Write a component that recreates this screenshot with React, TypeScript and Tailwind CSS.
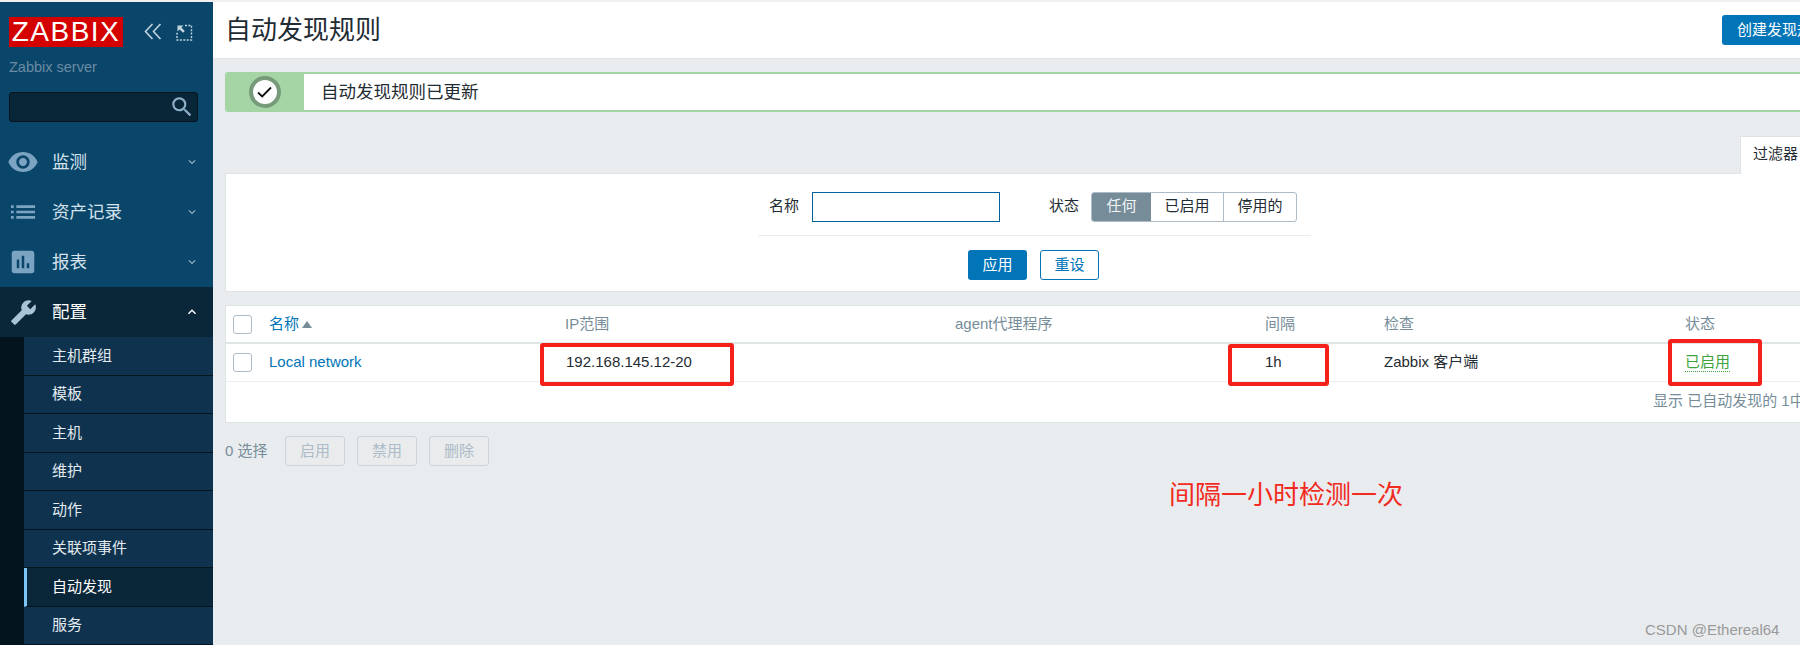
import { MdVisibility, MdList, MdAssessment, MdBuild, MdExpandMore, MdExpandLess, MdSearch } from "react-icons/md";

const font = { fontFamily: '"Liberation Sans","Noto Sans CJK SC",sans-serif' };

const mainNav = [
  { label: "监测", Icon: MdVisibility, size: 32 },
  { label: "资产记录", Icon: MdList, size: 32 },
  { label: "报表", Icon: MdAssessment, size: 30 },
];
const subNav = ["主机群组", "模板", "主机", "维护", "动作", "关联项事件", "自动发现", "服务"];

function Checkbox() {
  return <span className="block h-[19px] w-[19px] rounded-[3px] border border-[#acbbc7] bg-white" />;
}

function DisabledBtn({ label }: { label: string }) {
  return (
    <button className="flex h-[30px] w-[60px] items-center justify-center rounded-[3px] border border-[#cdd5db] bg-[#e9ebed] text-[15px] text-[#acbbc7]">
      {label}
    </button>
  );
}

function Sidebar() {
  return (
    <aside className="flex h-[643px] w-[213px] shrink-0 flex-col bg-[#0a466a]">
      <div className="flex h-[55px] shrink-0 items-start pl-[9px] pt-[15px]">
        <div className="flex h-[30px] w-[114px] items-center justify-center bg-[#d40000] text-[28px] leading-none tracking-[1.5px] text-white">
          ZABBIX
        </div>
        <svg className="ml-[21px] mt-[6px]" width="18" height="17" viewBox="0 0 18 17" fill="none" stroke="#c3d3df" strokeWidth="1.6">
          <path d="M8.5 1 1.5 8.5 8.5 16M16.5 1 9.5 8.5 16.5 16" />
        </svg>
        <svg className="ml-[14px] mt-[7px]" width="17" height="17" viewBox="0 0 17 17" fill="none" stroke="#c3d3df" strokeWidth="1.4">
          <path d="M9 1.5h6.5V16H1V8" strokeDasharray="2 1.4" />
          <path d="M1.5 1.5h6L5.4 3.6l3.4 3.4-1.8 1.8L3.6 5.4 1.5 7.5z" fill="#c3d3df" stroke="none" />
        </svg>
      </div>
      <div className="h-[20px] shrink-0 pl-[9px] text-[14.5px] leading-[20px] text-[#6a8ba3]">Zabbix server</div>
      <div className="relative ml-[9px] mt-[15px] h-[30px] w-[189px] shrink-0 rounded-[3px] border border-[#04141f] bg-[#082638]">
        <MdSearch className="absolute right-[2px] top-[1px] text-[#8db0c8]" size={26} />
      </div>
      <nav className="mt-[15px] flex flex-col">
        {mainNav.map(({ label, Icon, size }) => (
          <div key={label} className="flex h-[50px] items-center text-[#d5e2ec]">
            <span className="flex w-[52px] justify-center pr-[6px] text-[#7ba4c2]">
              <Icon size={size} />
            </span>
            <span className="flex-1 text-[17.5px]">{label}</span>
            <MdExpandMore className="mr-[14px] text-[#9fb9cc]" size={14} />
          </div>
        ))}
        <div className="flex h-[50px] items-center bg-[#0a2639] text-white">
          <span className="flex w-[52px] justify-center pr-[6px] text-[#a9c3d6]">
            <MdBuild size={27} className="-scale-x-100" />
          </span>
          <span className="flex-1 text-[17.5px]">配置</span>
          <MdExpandLess className="mr-[13px] text-white" size={16} />
        </div>
      </nav>
      <div className="flex flex-1 flex-col bg-[#04141f] pl-[24px]">
        {subNav.map((item) => {
          const active = item === "自动发现";
          return (
            <div
              key={item}
              className={
                active
                  ? "flex h-[38.5px] items-center border-b border-l-[3px] border-b-[#04141f] border-l-[#7ac5f5] bg-[#0a2639] pl-[25px] text-[15px] text-white"
                  : "flex h-[38.5px] items-center border-b border-[#04141f] bg-[#0f334f] pl-[28px] text-[15px] text-[#e4ebf0]"
              }
            >
              {item}
            </div>
          );
        })}
      </div>
    </aside>
  );
}

function Filter() {
  return (
    <div className="flex h-[119px] w-[1700px] flex-col border border-[#dfe4e7] bg-white">
      <div className="flex h-[61px] items-center pt-[4px]">
        <span className="ml-[543px] text-[15px] text-[#1f2c33]">名称</span>
        <span className="ml-[13px] block h-[30px] w-[188px] border border-[#00629c] bg-white" />
        <span className="ml-[49px] text-[15px] text-[#1f2c33]">状态</span>
        <div className="ml-[12px] flex h-[30px] w-[206px] overflow-hidden rounded-[3px] border border-[#acbbc7] text-[15px] text-[#1f2c33]">
          <span className="flex w-[59px] items-center justify-center bg-[#768d99] text-[#f0f3f5]">任何</span>
          <span className="flex w-[73px] items-center justify-center border-r border-[#acbbc7]">已启用</span>
          <span className="flex flex-1 items-center justify-center">停用的</span>
        </div>
      </div>
      <div className="ml-[532px] h-px w-[553px] bg-[#ebeef0]" />
      <div className="flex items-center gap-[13px] pl-[742px] pt-[14px]">
        <button className="flex h-[30px] w-[59px] items-center justify-center rounded-[3px] bg-[#0275b8] text-[15px] text-white">应用</button>
        <button className="flex h-[30px] w-[59px] items-center justify-center rounded-[3px] border border-[#0275b8] bg-white text-[15px] text-[#0275b8]">重设</button>
      </div>
    </div>
  );
}

function Table() {
  return (
    <div className="mt-[13px] w-[1700px] border border-[#dfe4e7] bg-white text-[15px]">
      <div className="flex h-[38px] items-center border-b-2 border-[#dfe4e7] text-[#768d99]">
        <span className="ml-[7px] w-[36px]"><Checkbox /></span>
        <span className="flex w-[296px] items-center gap-[3px] text-[#0275b8]">
          名称
          <svg width="10" height="7" viewBox="0 0 10 7"><path d="M5 0 10 7H0z" fill="#768d99" /></svg>
        </span>
        <span className="w-[390px]">IP范围</span>
        <span className="w-[310px]">agent代理程序</span>
        <span className="w-[119px]">间隔</span>
        <span className="w-[301px]">检查</span>
        <span>状态</span>
      </div>
      <div className="flex h-[38px] items-center border-b border-[#ebeef0] text-[#1f2c33]">
        <span className="ml-[7px] w-[36px]"><Checkbox /></span>
        <span className="w-[297px] text-[#0275b8]">Local network</span>
        <span className="w-[389px]">192.168.145.12-20</span>
        <span className="w-[310px]" />
        <span className="w-[119px]">1h</span>
        <span className="w-[301px]">Zabbix 客户端</span>
        <span className="border-b border-dotted border-[#3da33d] leading-[18px] text-[#3da33d]">已启用</span>
      </div>
      <div className="flex h-[40px] items-center pb-[1px] pl-[1427px] whitespace-nowrap text-[#768d99]">显示 已自动发现的 1中的1</div>
    </div>
  );
}

export default function App() {
  return (
    <div className="relative flex h-[645px] w-[1800px] overflow-hidden bg-[#e9ecef]" style={font}>
      <div className="flex w-full flex-col">
        <div className="h-[2px] shrink-0 bg-[#f0f0f0]" />
        <div className="flex">
          <Sidebar />
          <main className="min-w-0 flex-1 overflow-hidden">
            <header className="flex h-[57px] w-[1700px] items-center border-b border-[#dfe4e7] bg-white pl-[12px]">
              <h1 className="shrink-0 whitespace-nowrap text-[26px] font-normal leading-none text-[#1f2c33]">自动发现规则</h1>
              <button className="ml-[1341px] flex h-[30px] w-[130px] shrink-0 items-center rounded-[3px] bg-[#0275b8] pl-[15px] text-[15px] whitespace-nowrap text-white">
                创建发现规则
              </button>
            </header>
            <div className="w-[1700px] pl-[12px]">
              <div className="mt-[13px] flex h-[40px] w-[1688px] overflow-hidden rounded-[3px] bg-[#a5d5a5] p-[2px] pl-0">
                <div className="flex w-[79px] shrink-0 items-center justify-center">
                  <span className="flex h-[32px] w-[32px] items-center justify-center rounded-full border-[4px] border-[#779a7a] bg-white">
                    <svg width="15" height="12" viewBox="0 0 15 12" fill="none" stroke="#111" strokeWidth="1.8"><path d="M1 6.5 5.2 10.5 14 1.5" /></svg>
                  </span>
                </div>
                <div className="flex flex-1 items-center bg-white pl-[17px] text-[17.5px] text-[#1f2c33]">自动发现规则已更新</div>
              </div>
              <div className="mt-[24px] flex h-[37px] w-[1688px] justify-end">
                <div className="-mb-px h-[38px] w-[173px] border-l border-t border-[#dfe4e7] bg-white pl-[12px] pt-[6px] text-[15px] text-[#1f2c33]">过滤器</div>
              </div>
              <Filter />
              <Table />
              <div className="mt-[13px] flex items-center text-[15px] text-[#768d99]">
                <span className="w-[60px]">0 选择</span>
                <span className="flex gap-[12px]">
                  <DisabledBtn label="启用" />
                  <DisabledBtn label="禁用" />
                  <DisabledBtn label="删除" />
                </span>
              </div>
            </div>
          </main>
        </div>
      </div>
      <div className="absolute left-[540px] top-[343px] h-[43px] w-[194px] rounded-[3px] border-[4px] border-[#f5201a]" />
      <div className="absolute left-[1228px] top-[344px] h-[42px] w-[101px] rounded-[3px] border-[4px] border-[#f5201a]" />
      <div className="absolute left-[1668px] top-[339px] h-[47px] w-[94px] rounded-[3px] border-[4px] border-[#f5201a]" />
      <div className="absolute left-[1169px] top-[478px] text-[26px] leading-[34px] text-[#f22a20]">间隔一小时检测一次</div>
      <div className="absolute left-[1645px] top-[620px] text-[15px] leading-[20px] text-[#9a9a9a]">CSDN @Ethereal64</div>
    </div>
  );
}
